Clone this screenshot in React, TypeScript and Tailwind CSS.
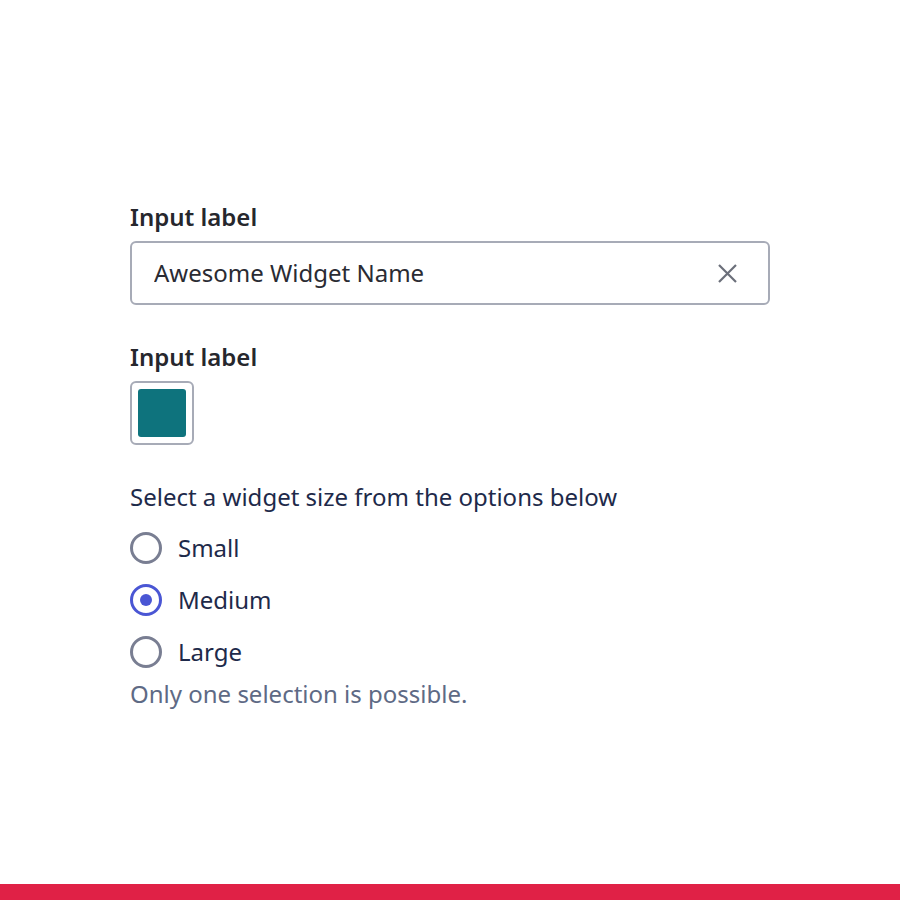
import { useState } from 'react';

const sizes = ['Small', 'Medium', 'Large'];

export default function App() {
  const [name, setName] = useState('Awesome Widget Name');
  const [size, setSize] = useState('Medium');

  return (
    <div
      className="flex h-[900px] w-[900px] flex-col bg-white"
      style={{ fontFamily: '"Noto Sans", sans-serif' }}
    >
      <div className="flex flex-1 flex-col px-[130px] pt-[201px]">
        <label className="text-[24px] leading-[32px] font-semibold text-[#26272d]">Input label</label>
        <div className="mt-2 flex h-16 items-center rounded-md border-2 border-[#a7abb7] pr-[31px] pl-[22px]">
          <input
            value={name}
            onChange={(e) => setName(e.target.value)}
            className="flex-1 bg-transparent text-[24px] text-[#2a2b33] outline-none"
          />
          <button onClick={() => setName('')} className="text-[#6b6f7a]">
            <svg width="19" height="19" viewBox="0 0 19 19" fill="none" stroke="currentColor" strokeWidth="2.2">
              <path d="M1 1L18 18M18 1L1 18" />
            </svg>
          </button>
        </div>

        <label className="mt-9 text-[24px] leading-[32px] font-semibold text-[#26272d]">Input label</label>
        <div className="mt-2 flex h-16 w-16 items-center justify-center rounded-md border-2 border-[#a7abb7]">
          <div className="h-12 w-12 rounded-[3px] bg-[#0e737d]" />
        </div>

        <p className="mt-9 text-[24px] leading-[32px] text-[#1e2a4a]">
          Select a widget size from the options below
        </p>
        <div className="mt-[19px] flex flex-col gap-5">
          {sizes.map((s) => {
            const checked = s === size;
            return (
              <label key={s} className="flex h-8 cursor-pointer items-center gap-4" onClick={() => setSize(s)}>
                <span
                  className={`flex h-8 w-8 items-center justify-center rounded-full border-[3px] ${
                    checked ? 'border-[#4a56d4]' : 'border-[#797e92]'
                  }`}
                >
                  {checked && <span className="h-3 w-3 rounded-full bg-[#4a56d4]" />}
                </span>
                <span className="text-[24px] text-[#1e2a4a]">{s}</span>
              </label>
            );
          })}
        </div>
        <p className="mt-[10px] text-[24px] leading-[32px] text-[#5e6a85]">Only one selection is possible.</p>
      </div>
      <div className="h-4 bg-[#e02146]" />
    </div>
  );
}
